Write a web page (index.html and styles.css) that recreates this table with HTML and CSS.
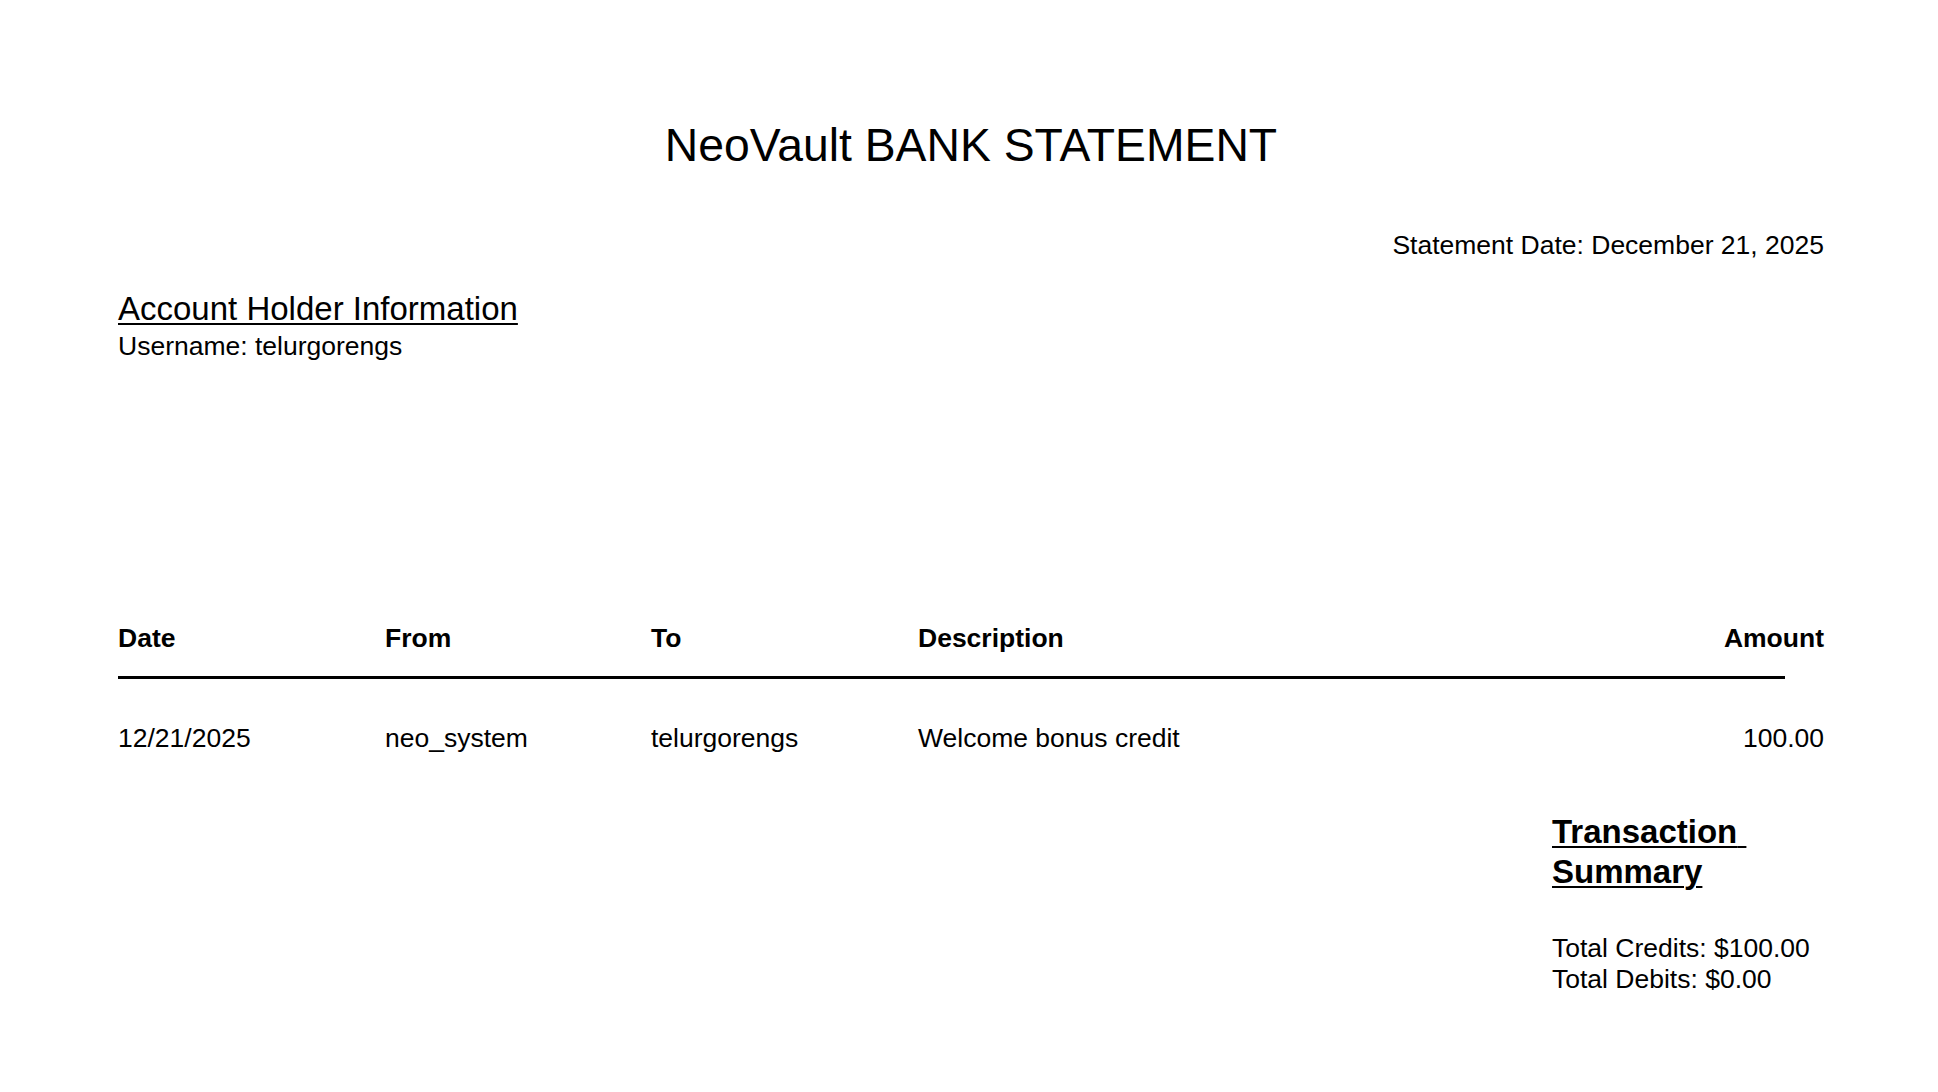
FILE: index.html
```html
<!DOCTYPE html>
<html lang="en">
<head>
<meta charset="utf-8">
<title>NeoVault Bank Statement</title>
<link rel="stylesheet" href="styles.css">
</head>
<body>
<main class="page">
  <h1 class="title">NeoVault BANK STATEMENT</h1>
  <p class="statement-date">Statement Date: December 21, 2025</p>
  <section class="holder">
    <h2 class="holder-heading">Account Holder Information</h2>
    <p class="holder-line">Username: telurgorengs</p>
  </section>
  <section class="txn">
    <div class="txn-row txn-head">
      <div>Date</div>
      <div>From</div>
      <div>To</div>
      <div>Description</div>
      <div class="amount">Amount</div>
    </div>
    <div class="rule"></div>
    <div class="txn-row txn-body">
      <div>12/21/2025</div>
      <div>neo_system</div>
      <div>telurgorengs</div>
      <div>Welcome bonus credit</div>
      <div class="amount">100.00</div>
    </div>
  </section>
  <section class="summary">
    <h2 class="summary-heading">Transaction Summary</h2>
    <p class="summary-line">Total Credits: $100.00</p>
    <p class="summary-line">Total Debits: $0.00</p>
  </section>
</main>
</body>
</html>
```
FILE: styles.css
```css
html, body {
  margin: 0;
  padding: 0;
  background: #ffffff;
}

body {
  font-family: "Liberation Sans", Arial, Helvetica, sans-serif;
  color: #000000;
  font-size: 26.5px;
  line-height: 1.15;
}

.page {
  display: flex;
  flex-direction: column;
  padding: 119px 114px 0 118px;
}

p, h1, h2 {
  margin: 0;
}

.title {
  font-size: 46.3px;
  font-weight: normal;
  text-align: center;
}

.statement-date {
  margin-top: 58px;
  text-align: right;
}

.holder {
  margin-top: 29px;
  display: flex;
  flex-direction: column;
}

.holder-heading {
  font-size: 33px;
  font-weight: normal;
  text-decoration: underline;
  text-decoration-thickness: 2px;
  text-underline-offset: 3px;
}

.holder-line {
  margin-top: 3px;
}

.txn {
  margin-top: 262px;
  display: flex;
  flex-direction: column;
}

.txn-row {
  display: grid;
  grid-template-columns: 267px 266px 267px 1fr auto;
}

.txn-head {
  font-weight: bold;
}

.amount {
  text-align: right;
}

.rule {
  height: 3px;
  background: #000000;
  margin-top: 22px;
  margin-right: 39px;
}

.txn-body {
  margin-top: 44px;
}

.summary {
  align-self: flex-end;
  width: 272px;
  margin-top: 59px;
}

.summary-heading {
  font-size: 33px;
  font-weight: bold;
  line-height: 1.2;
  white-space: pre-wrap;
  text-decoration: underline;
  text-decoration-thickness: 2px;
  text-underline-offset: 3px;
}

.summary-line:first-of-type {
  margin-top: 42px;
}
```
